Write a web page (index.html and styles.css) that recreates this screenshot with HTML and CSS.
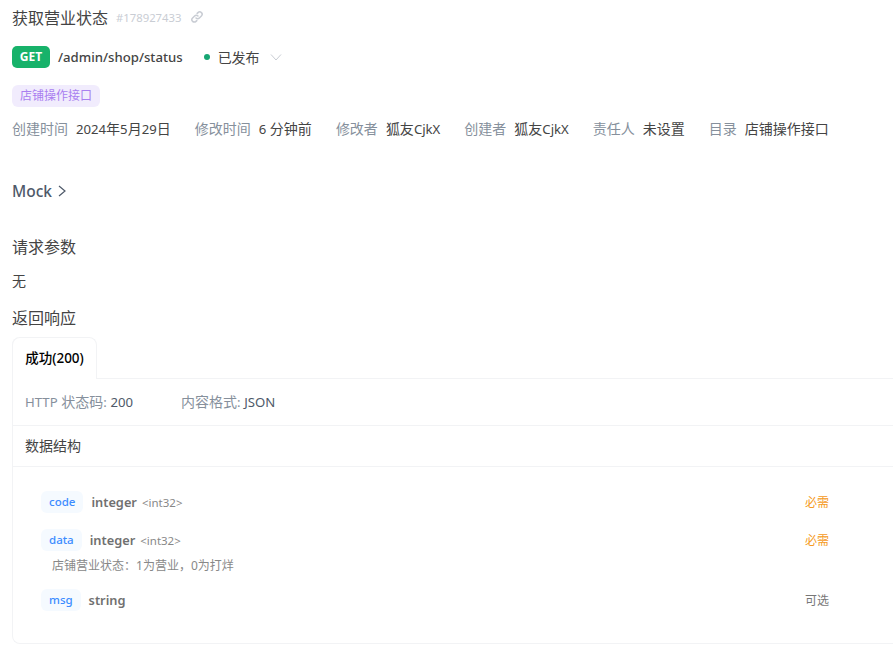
FILE: index.html
```html
<!DOCTYPE html>
<html lang="zh-CN">
<head>
    <meta charset="UTF-8">
    <meta name="viewport" content="width=device-width, initial-scale=1.0">
    <title>获取营业状态</title>
    <link rel="stylesheet" href="styles.css">
</head>
<body>

<div class="page">
    <div class="title-row">
        <h1>获取营业状态</h1>
        <span class="api-id en">#178927433</span>
        <svg class="link-icon" width="14" height="14" viewBox="0 0 14 14" fill="none" stroke="#c9cdd4" stroke-width="1.500" stroke-linecap="round">
            <path d="M6 8a2.4 2.4 0 0 0 3.4 0l2-2A2.4 2.4 0 0 0 8 2.600l-.8.8"/>
            <path d="M8 6a2.400 2.400 0 0 0-3.400 0l-2 2A2.400 2.400 0 0 0 6 11.400l.8-.8"/>
        </svg>
    </div>

    <div class="method-row">
        <span class="method">GET</span>
        <span class="path en">/admin/shop/status</span>
        <span class="dot"></span>
        <span class="status">已发布</span>
        <svg class="caret" width="12" height="12" viewBox="0 0 12 12" fill="none" stroke="#c9cdd4" stroke-width="1">
            <path d="M1 3.500l5 5.500 5-5.500"/>
        </svg>
    </div>

    <div class="tag">店铺操作接口</div>

    <div class="meta-row">
        <span class="meta"><span class="meta-key">创建时间</span><span class="en">2024</span>年<span class="en">5</span>月<span class="en">29</span>日</span>
        <span class="meta"><span class="meta-key">修改时间</span><span class="en">6</span> 分钟前</span>
        <span class="meta"><span class="meta-key">修改者</span>狐友<span class="en">CjkX</span></span>
        <span class="meta"><span class="meta-key">创建者</span>狐友<span class="en">CjkX</span></span>
        <span class="meta"><span class="meta-key">责任人</span>未设置</span>
        <span class="meta"><span class="meta-key">目录</span>店铺操作接口</span>
    </div>

    <div class="mock">
        <span class="en">Mock</span>
        <svg width="10" height="12" viewBox="0 0 10 12" fill="none" stroke="#4e5969" stroke-width="1.200">
            <path d="M2 1l6 5-6 5"/>
        </svg>
    </div>

    <h2 class="req-title">请求参数</h2>
    <p class="none">无</p>
    <h2 class="resp-title">返回响应</h2>

    <div class="card">
        <div class="tab-bar">
            <div class="tab">成功<span class="en">(200)</span></div>
        </div>
        <div class="info-row">
            <span class="info"><span class="en">HTTP</span> 状态码<span class="en">:</span> <span class="en val">200</span></span>
            <span class="info">内容格式<span class="en">:</span> <span class="en val">JSON</span></span>
        </div>
        <div class="struct-title">数据结构</div>
        <div class="fields">
            <div class="field">
                <span class="name en">code</span>
                <span class="type en">integer</span>
                <span class="format en">&lt;int32&gt;</span>
                <span class="req">必需</span>
            </div>
            <div class="field field-data">
                <span class="name en">data</span>
                <span class="type en">integer</span>
                <span class="format en">&lt;int32&gt;</span>
                <span class="req">必需</span>
            </div>
            <div class="desc">店铺营业状态：<span class="en">1</span>为营业，<span class="en">0</span>为打烊</div>
            <div class="field field-msg">
                <span class="name en">msg</span>
                <span class="type en">string</span>
                <span class="req opt">可选</span>
            </div>
        </div>
    </div>
</div>

</body>
</html>
```

FILE: styles.css
```css
html, body {
    margin: 0;
    padding: 0;
    background-color: #fff;
    overflow: hidden;
}
body {
    font-family: "Noto Sans", "Noto Sans CJK SC", sans-serif;
    font-size: 14px;
    color: #1d2129;
}
.en {
    font-size: 0.94em;
}
.page {
    width: 881px;
    height: 671px;
    padding-left: 12px;
    overflow: hidden;
}
.title-row {
    display: flex;
    align-items: center;
    height: 34px;
}
h1 {
    margin: 0;
    font-size: 16px;
    font-weight: 400;
    color: #444;
}
.api-id {
    margin-left: 8px;
    font-size: 11.3px;
    color: #c9cdd4;
}
.link-icon {
    margin-left: 9px;
}
.method-row {
    display: flex;
    align-items: center;
    height: 22px;
    margin-top: 12px;
}
.method {
    width: 38px;
    height: 22px;
    line-height: 22px;
    text-align: center;
    border-radius: 5px;
    background-color: #17b26a;
    color: #fff;
    font-size: 12px;
    font-weight: 700;
}
.path {
    margin-left: 8px;
    font-weight: 500;
    color: #444;
}
.dot {
    width: 6px;
    height: 6px;
    margin-left: 21px;
    border-radius: 50%;
    background-color: #17a673;
}
.status {
    margin-left: 8px;
    color: #444;
}
.caret {
    margin-left: 10px;
}
.tag {
    width: 88px;
    height: 22px;
    line-height: 22px;
    margin-top: 17px;
    text-align: center;
    border-radius: 6px;
    background-color: #f1ecfd;
    color: #a97ff0;
    font-size: 12px;
}
.meta-row {
    display: flex;
    gap: 24px;
    height: 22px;
    line-height: 22px;
    margin-top: 11px;
    white-space: nowrap;
}
.meta {
    color: #444;
}
.meta-key {
    margin-right: 8px;
    color: #86909c;
}
.mock {
    display: flex;
    align-items: center;
    gap: 5px;
    height: 24px;
    margin-top: 39px;
    font-size: 16.500px;
    font-weight: 500;
    color: #4e5969;
}
h2 {
    margin: 0;
    height: 24px;
    line-height: 24px;
    font-size: 16px;
    font-weight: 400;
    color: #444;
}
.req-title {
    margin-top: 32px;
}
.none {
    margin: 11px 0 0;
    height: 22px;
    line-height: 22px;
    color: #444;
}
.resp-title {
    margin-top: 14px;
}
.card {
    height: 306px;
    margin-top: 7px;
    border-left: 1px solid #f2f3f5;
    border-bottom: 1px solid #f2f3f5;
    border-radius: 8px 0 0 8px;
}
.tab-bar {
    height: 41px;
    border-bottom: 1px solid #f2f3f5;
}
.tab {
    width: 83px;
    height: 41px;
    margin-left: -1px;
    line-height: 41px;
    text-align: center;
    background-color: #fff;
    border: 1px solid #f2f3f5;
    border-bottom: none;
    border-radius: 8px 8px 0 0;
    font-size: 13.5px;
    font-weight: 500;
    color: #000;
}
.tab .en {
    font-size: 13.5px;
}
.info-row {
    display: flex;
    gap: 48px;
    height: 46px;
    line-height: 46px;
    padding-left: 12px;
    border-bottom: 1px solid #f2f3f5;
    color: #86909c;
}
.val {
    color: #4e5969;
}
.struct-title {
    height: 40px;
    line-height: 40px;
    padding-left: 12px;
    border-bottom: 1px solid #f2f3f5;
    color: #444;
}
.fields {
    padding: 24px 64px 0 28px;
}
.field {
    display: flex;
    align-items: center;
    height: 22px;
}
.field-data {
    margin-top: 16px;
}
.field-msg {
    margin-top: 12px;
}
.name {
    height: 22px;
    line-height: 22px;
    padding: 0 8px;
    border-radius: 6px;
    background-color: #f5faff;
    color: #3c8cff;
    font-size: 11.5px;
    font-weight: 500;
}
.type {
    margin-left: 8px;
    font-size: 12.8px;
    font-weight: 600;
    color: #707070;
}
.format {
    margin-left: 5px;
    font-size: 11.5px;
    color: #888;
}
.req {
    margin-left: auto;
    font-size: 12px;
    color: #f59a23;
}
.opt {
    color: #777;
}
.desc {
    height: 26px;
    line-height: 30px;
    padding-left: 11px;
    font-size: 12px;
    color: #888;
}
.desc .en {
    font-size: 12px;
}
```
